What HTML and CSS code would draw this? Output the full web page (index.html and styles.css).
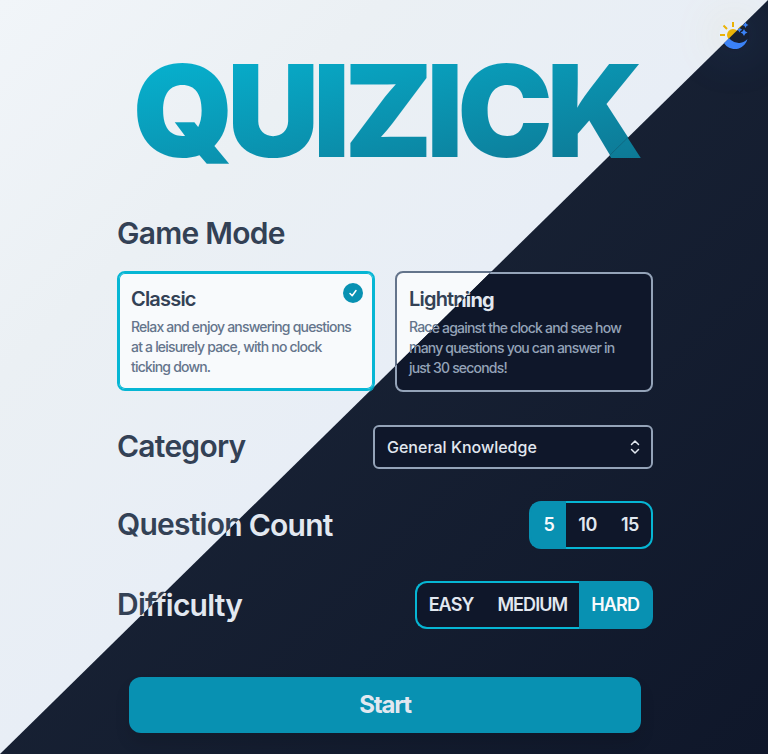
FILE: index.html
```html
<!DOCTYPE html>
<html lang="en">
<head>
<meta charset="utf-8">
<meta name="viewport" content="width=device-width, initial-scale=1">
<title>Quizick</title>
<link rel="stylesheet" href="styles.css">
</head>
<body>
<div class="stage">
  <div class="theme light" id="light">
    <button class="theme-toggle" type="button" aria-label="Toggle theme">
      <svg class="sun" viewBox="0 0 30 30" fill="none" stroke="currentColor" stroke-width="2"><circle cx="14" cy="15" r="6" fill="currentColor" stroke="none"/><path d="M14 2v5M4.500 5.500L8 9M1 15h5M23 6l-3.500 3.500"/></svg>
      <svg class="moon" viewBox="0 0 30 30" fill="currentColor"><path d="M28.500 19A13 13 0 1 1 11 4a11.500 11.500 0 0 0 17.500 15z"/><path d="M25 9l1.200 2.300 2.300 1.200-2.300 1.200L25 16l-1.200-2.300-2.300-1.200 2.300-1.200zM26.500 2l1 2 2 1-2 1-1 2-1-2-2-1 2-1zM20.500 7l1 1.800 1.800 1-1.800 1-1 1.800-1-1.800-1.800-1 1.800-1z"/></svg>
    </button>
    <main class="page">
      <h1 class="title">QUIZICK</h1>
      <form class="settings">
        <fieldset class="group">
          <legend class="heading">Game Mode</legend>
          <div class="cards">
            <label class="card"><input type="radio" name="mode" checked>
              <span class="card-title">Classic</span>
              <span class="card-text">Relax and enjoy answering questions at a leisurely pace, with no clock ticking down.</span>
              <svg class="check" viewBox="0 0 20 20"><circle cx="10" cy="10" r="10" fill="currentColor"/><path d="M7 10.500l2.200 2.300L13 7.500" fill="none" stroke="#fff" stroke-width="1.500" stroke-linecap="round" stroke-linejoin="round"/></svg>
            </label>
            <label class="card"><input type="radio" name="mode">
              <span class="card-title">Lightning</span>
              <span class="card-text">Race against the clock and see how many questions you can answer in just 30 seconds!</span>
            </label>
          </div>
        </fieldset>
        <div class="row category">
          <label class="heading" for="category">Category</label>
          <div class="select-box">
            <select class="select" id="category"><option>General Knowledge</option></select>
            <svg class="arrows" viewBox="0 0 20 20" fill="none" stroke="currentColor" stroke-width="1.500" stroke-linecap="round" stroke-linejoin="round"><path d="M6.500 7.500L10 4l3.500 3.500M6.500 12.500L10 16l3.500-3.500"/></svg>
          </div>
        </div>
        <div class="row" role="radiogroup" aria-label="Question Count">
          <span class="heading">Question Count</span>
          <div class="segments">
            <label class="segment"><input type="radio" name="count" checked>5</label>
            <label class="segment"><input type="radio" name="count">10</label>
            <label class="segment"><input type="radio" name="count">15</label>
          </div>
        </div>
        <div class="row" role="radiogroup" aria-label="Difficulty">
          <span class="heading">Difficulty</span>
          <div class="segments level">
            <label class="segment"><input type="radio" name="difficulty">EASY</label>
            <label class="segment"><input type="radio" name="difficulty">MEDIUM</label>
            <label class="segment"><input type="radio" name="difficulty" checked>HARD</label>
          </div>
        </div>
        <button class="start" type="button">Start</button>
      </form>
    </main>
  </div>
</div>
<script src="theme.js"></script>
</body>
</html>
```
FILE: theme.js
```js
// Draws the dark half of the page as a second layer over the light one.
const light = document.getElementById("light");
const dark = light.cloneNode(true);
dark.id = "dark";
dark.className = "theme dark";
dark.querySelectorAll("input").forEach(i => { i.name += "-dark"; });
dark.querySelector("select").id = "category-dark";
dark.querySelector("[for]").htmlFor = "category-dark";
light.after(dark);
light.inert = true;
```
FILE: styles.css
```css
* { box-sizing: border-box; }

body {
  margin: 0;
  font-family: Inter, "Liberation Sans", sans-serif;
}

.stage { display: grid; min-height: 100vh; overflow: hidden; }

.theme {
  grid-area: 1 / 1;
  position: relative;
  padding: 47px 16px 20px 18px;
}

.light {
  --text: #334155;
  --muted: #64748b;
  --line: #64748b;
  --panel: #f8fafc;
  --card-weight: 600;
  color: var(--text);
  background: linear-gradient(to bottom right, #f1f5f9, #ebf0f4 25%, #e8eef6 50%, #e2e8f0);
}

.dark {
  --text: #e2e8f0;
  --muted: #94a3b8;
  --line: #94a3b8;
  --panel: #0f172a;
  --card-weight: 700;
  padding-top: 48px;
  color: var(--text);
  background: linear-gradient(to bottom right, #1e293b, #0f172a);
  clip-path: polygon(100% 0, 100% 100%, 0 100%);
}

.page { max-width: 536px; margin: 0 auto; }

.title {
  margin: 0 0 40px;
  font-size: 128px;
  line-height: 128px;
  font-weight: 900;
  letter-spacing: -0.05em;
  text-align: center;
  color: transparent;
  background: linear-gradient(to bottom right, #06b6d4, #0e7490);
  background-clip: text;
}

.settings { display: flex; flex-direction: column; gap: 32px; }
.group { border: 0; margin: 0; padding: 0; min-width: 0; }

.heading {
  padding: 0;
  font-size: 30px;
  line-height: 36px;
  font-weight: 600;
  letter-spacing: -0.025em;
}

.cards {
  display: grid;
  grid-template-columns: 1fr 1fr;
  gap: 20px;
  margin-top: 20px;
}

.card {
  position: relative;
  display: flex;
  flex-direction: column;
  gap: 4px;
  padding: 12px 20px 12px 12px;
  border: 2px solid var(--line);
  border-radius: 8px;
  background: var(--panel);
  letter-spacing: -0.05em;
}

.card:has(:checked) { border-color: #06b6d4; box-shadow: inset 0 0 0 1px #06b6d4; }

.card input, .segment input {
  position: absolute;
  opacity: 0;
  pointer-events: none;
}

.card-title { font-size: 20px; line-height: 28px; font-weight: var(--card-weight); }
.card-text { font-size: 14px; line-height: 20px; font-weight: 500; color: var(--muted); }
.check { position: absolute; top: 10px; right: 10px; width: 20px; height: 20px; color: #0891b2; }

.row { display: flex; justify-content: space-between; align-items: center; }
.category { padding-top: 1px; }

.select-box { position: relative; width: 280px; }

.select {
  appearance: none;
  display: block;
  width: 100%;
  height: 44px;
  padding: 0 12px;
  border: 2px solid var(--line);
  border-radius: 6px;
  background: var(--panel);
  color: var(--text);
  font: 500 16px/24px Inter, sans-serif;
}

.arrows { position: absolute; top: 12px; right: 8px; width: 20px; height: 20px; pointer-events: none; }

.segments { display: flex; }

.segment {
  height: 48px;
  padding: 8px 12px;
  border: 2px solid #06b6d4;
  border-width: 2px 0;
  background: var(--panel);
  font-size: 18px;
  line-height: 28px;
  font-weight: 600;
  letter-spacing: -0.025em;
}

.level .segment { letter-spacing: -0.05em; }

.segment:first-child { border-left-width: 2px; border-radius: 12px 0 0 12px; }
.segment:last-child { border-right-width: 2px; border-radius: 0 12px 12px 0; }
.segment:has(:checked) { border-color: #0891b2; background: #0891b2; color: #f8fafc; }

.start {
  margin: 16px 12px 0;
  height: 56px;
  border: 0;
  border-radius: 12px;
  background: #0891b2;
  color: #e2e8f0;
  font: 700 24px/32px Inter, sans-serif;
  letter-spacing: -0.05em;
  box-shadow: 0 10px 15px rgb(0 0 0 / 10%);
}

.theme-toggle {
  position: absolute;
  top: 20px;
  right: 19px;
  width: 30px;
  height: 30px;
  padding: 0;
  border: 0;
  border-radius: 50%;
  background: none;
}

.theme-toggle svg { display: block; width: 30px; height: 30px; }
.light .theme-toggle { color: #eab308; box-shadow: 0 0 50px rgb(234 179 8 / 20%); }
.dark .theme-toggle { color: #3b82f6; box-shadow: 0 0 50px rgb(59 130 246 / 25%); }
.light .moon, .dark .sun { display: none; }
```
